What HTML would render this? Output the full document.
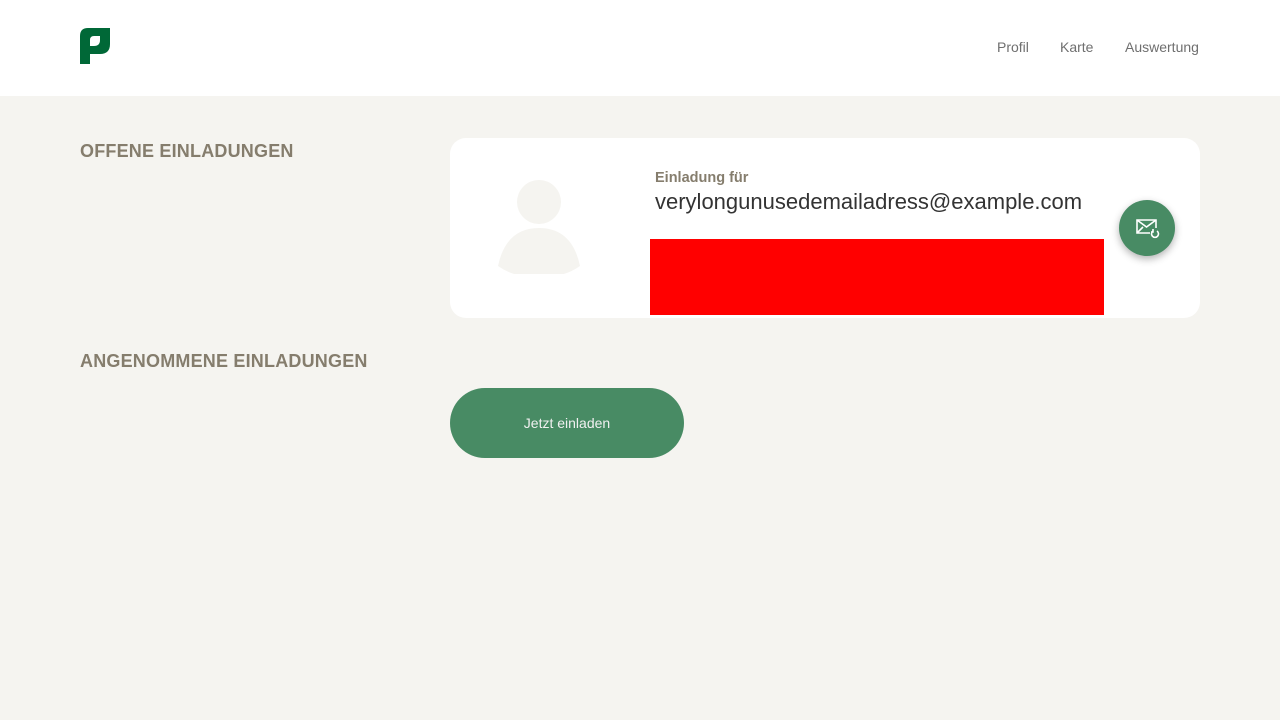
<!DOCTYPE html>
<html><head><meta charset="utf-8"><style>
*{margin:0;padding:0;box-sizing:border-box}
body{width:1280px;height:720px;background:#f5f4f0;font-family:"Liberation Sans",sans-serif;position:relative;overflow:hidden}
header{position:absolute;left:0;top:0;width:1280px;height:96px;background:#fff}
nav a{position:absolute;top:39px;font-size:14px;color:#6f6f6f;text-decoration:none;font-weight:300}
h2{position:absolute;left:80px;font-size:18px;font-weight:bold;color:#857d6d;letter-spacing:.2px}
.card{position:absolute;left:450px;top:138px;width:750px;height:180px;background:#fff;border-radius:16px;overflow:hidden}
.red{position:absolute;left:200px;top:101px;width:454px;height:76px;background:#f00}
.fab{position:absolute;left:1119px;top:200px;width:56px;height:56px;border-radius:50%;background:#488b64;box-shadow:0 3px 8px rgba(0,0,0,.3)}
.btn{position:absolute;left:450px;top:388px;width:234px;height:70px;border-radius:35px;background:#488b64;color:#f0f0f0;font-size:14px;text-align:center;line-height:70px;font-weight:300}
</style></head><body>
<header>
<svg style="position:absolute;left:80px;top:28px" width="30" height="36" viewBox="0 0 30 36"><path fill="#006837" d="M0 8Q0 0 8 0H30V16Q30 26 20 26H10V36H0Z"/><path fill="#fff" d="M10 18V12Q10 8 14 8H20V12Q20 18 14 18Z"/></svg>
<nav><a style="left:997px">Profil</a><a style="left:1060px">Karte</a><a style="left:1125px">Auswertung</a></nav>
</header>
<h2 style="top:141px">OFFENE EINLADUNGEN</h2>
<div class="card">
<svg style="position:absolute;left:48px;top:42px" width="84" height="94" viewBox="0 0 84 94"><circle cx="41" cy="22" r="22" fill="#f5f4f0"/><path d="M0 86Q8 48 41 48Q74 48 82 86Q62 100 41 94Q20 100 0 86Z" fill="#f5f4f0"/></svg>
<div style="position:absolute;left:205px;top:32px;font-size:14.5px;color:#857d6d;font-weight:bold">Einladung für</div>
<div style="position:absolute;left:205px;top:51px;font-size:22px;color:#333;font-weight:300">verylongunusedemailadress@example.com</div>
<div class="red"></div>
</div>
<div class="fab"><svg style="position:absolute;left:17px;top:19px" width="24" height="20" viewBox="0 0 24 20" fill="none" stroke="#fff" stroke-width="1.6"><path d="M14 14H1V1H20V9"/><path d="M1 1L10.5 8L20 1"/><path d="M1 14L7 8"/><path d="M17 12a3.5 3.5 0 1 0 4 0"/><path d="M17 10v3h-2"/></svg></div>
<h2 style="top:351px">ANGENOMMENE EINLADUNGEN</h2>
<div class="btn">Jetzt einladen</div>
</body></html>
